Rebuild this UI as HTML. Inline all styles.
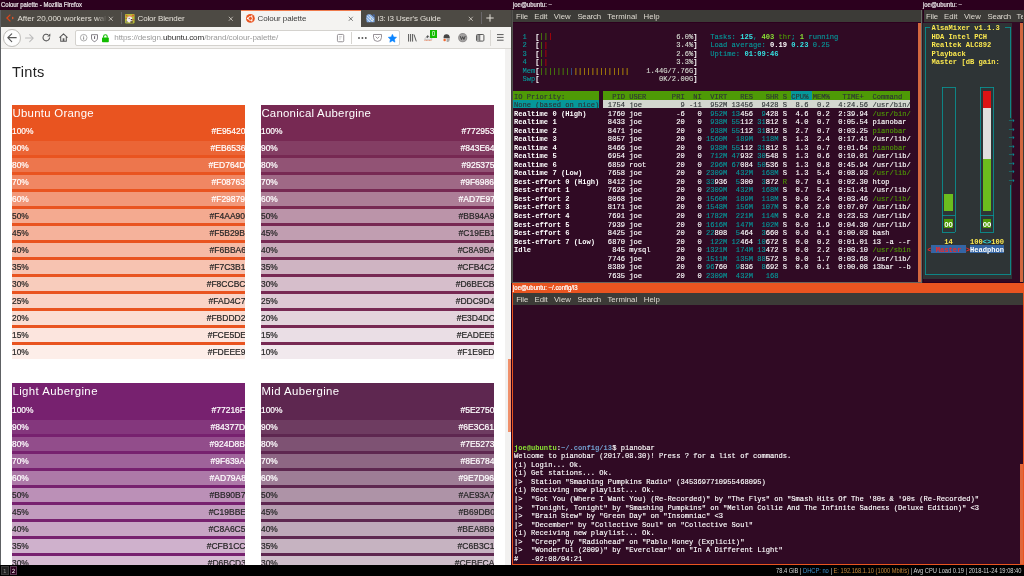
<!DOCTYPE html><html><head><meta charset="utf-8"><title>Colour palette - Mozilla Firefox</title><style>
*{box-sizing:border-box}
html,body{margin:0;padding:0}
body{width:1024px;height:576px;overflow:hidden;position:relative;background:#2c001e;font-family:"Liberation Sans",sans-serif}
#root{position:absolute;left:0;top:0;width:1024px;height:576px;overflow:hidden;background:#2c001e;will-change:transform}
.abs,.term,.term i,.term b,.tbg,.ttx{position:absolute}
.abs{overflow:hidden}
.term{width:0;height:0}
.term i{display:block}
.tbg,.ttx{left:0;top:0}
.ttx{transform-origin:0 0;transform:scale(0.0888745,0.0950000);font:80px/89.825px "Liberation Mono",monospace;white-space:pre}
.ttx b{font-weight:normal;display:block;-webkit-text-stroke:1.5px}
.ttl{position:absolute;top:0;height:9.5px;line-height:9.3px;font-size:6.3px;color:#e6e1e4;white-space:pre;-webkit-text-stroke:.22px}
.menu{position:absolute;height:12.6px;background:#3c3b37;color:#dfdbd2;font-size:7.8px;line-height:13.6px;white-space:pre;overflow:hidden}
.menu span{position:absolute;top:0}
.pal{position:absolute;width:233px;overflow:hidden;color:#fff}
.ph{position:absolute;left:.4px;top:1px;font-size:11.4px;line-height:14px;white-space:pre}
.pr{position:absolute;left:0;width:233px;height:13.75px;font-size:8.9px;line-height:14.2px;white-space:pre;-webkit-text-stroke:.22px}
.pr.dk{color:#262626}
.pl{position:absolute;left:0;transform-origin:0 50%;transform:scaleX(.944)}.pv{position:absolute;right:-.5px;transform-origin:100% 50%;transform:scaleX(.958)}
.tab{position:absolute;top:9.5px;height:17px;font-size:8px;line-height:17.5px;color:#e4e0d8;white-space:pre;overflow:hidden}
.tab .tx{position:absolute;left:16.5px;top:0}
.tab .x{position:absolute;left:107.3px;top:6.3px;width:5.6px;height:5.6px}
</style></head><body><div id="root"><div class="ttl" style="left:1px"><span class="f-ttl" style="display:inline-block;transform-origin:0 50%;transform:scaleX(0.9486)">Colour palette - Mozilla Firefox</span></div><div class="abs" style="left:0;top:9.5px;width:511px;height:556px;background:#fff"></div><div class="abs" style="left:0;top:9.5px;width:511px;height:17px;background:#4d4a44"></div><div class="abs" style="left:0;top:26.5px;width:511px;height:22.4px;background:#f4f3f1;border-bottom:.9px solid #d9d7d3"></div><div class="tab" style="left:1px;width:120px"><span class="tx"><span class="f-tab" style="letter-spacing:0.019px">After 20,000 workers wal</span></span><svg class="x" viewBox="0 0 7 7"><path d="M1 1L6 6M6 1L1 6" stroke="#e4e0d8" stroke-width="0.9" fill="none"/></svg></div><div class="tab" style="left:121px;width:120px"><span class="tx"><span class="f-tab" style="letter-spacing:-0.148px">Color Blender</span></span><svg class="x" viewBox="0 0 7 7"><path d="M1 1L6 6M6 1L1 6" stroke="#e4e0d8" stroke-width="0.9" fill="none"/></svg></div><div class="tab" style="left:241px;width:120px;background:#f4f3f1;color:#3c3c3c;border-top:1px solid #ee7a4c"><span class="tx" style="top:-1px"><span class="f-tab" style="letter-spacing:-0.072px">Colour palette</span></span><svg class="x" style="top:5.3px" viewBox="0 0 7 7"><path d="M1 1L6 6M6 1L1 6" stroke="#444" stroke-width="0.9" fill="none"/></svg></div><div class="tab" style="left:361px;width:120px"><span class="tx"><span class="f-tab" style="letter-spacing:-0.095px">i3: i3 User's Guide</span></span><svg class="x" viewBox="0 0 7 7"><path d="M1 1L6 6M6 1L1 6" stroke="#e4e0d8" stroke-width="0.9" fill="none"/></svg></div><div class="abs" style="left:96px;top:11px;width:11px;height:14px;background:linear-gradient(90deg,rgba(77,74,68,0),#4d4a44)"></div><div class="abs" style="left:120.7px;top:12.3px;width:1px;height:12px;background:#6a676a"></div><div class="abs" style="left:480.6px;top:12.3px;width:1px;height:12px;background:#6a676a"></div><svg style="position:absolute;left:485.6px;top:14px;width:8px;height:8px;overflow:visible" viewBox="0 0 8 8"><path d="M4 .3V7.7M.3 4H7.7" stroke="#e4e0d8" stroke-width="1" fill="none"/></svg><svg style="position:absolute;left:6px;top:14.3px;width:8.4px;height:8px;overflow:visible" viewBox="0 0 8.4 8"><path d="M4.4 .6L.9 4L4.4 7.4" stroke="#d9451b" stroke-width="1.3" fill="none"/><path d="M6 2.6L8 4L6 5.4z" fill="#e2562a"/></svg><svg style="position:absolute;left:125.3px;top:13.7px;width:9.6px;height:9.4px;overflow:visible" viewBox="0 0 9.6 9.4"><rect width="9.6" height="9.4" rx=".8" fill="#b4bb36"/><circle cx="1.6" cy="1.6" r=".9" fill="#e2532d"/><circle cx="8" cy="1.5" r=".9" fill="#e2532d"/><circle cx="8.3" cy="5.8" r=".8" fill="#e2532d"/><circle cx="1.2" cy="4.4" r=".7" fill="#c24a2a"/><path d="M2.6 2.8C3.4 1 6.4 1 7 2.8L6.6 3.6H3z" fill="#ee7a5a"/><ellipse cx="4.6" cy="5.6" rx="2.7" ry="3" fill="#f4eaf0"/><rect x="5.8" y="5" width="1.6" height="1.2" fill="#3a3a3a"/><rect x="3.6" y="3.9" width="1.2" height=".9" fill="#666"/><rect x="5.4" y="7.2" width="2.4" height="1.6" fill="#5a4a3a"/><rect x=".8" y="7" width="1.6" height="1.8" fill="#8a8a7a"/></svg><svg style="position:absolute;left:245.6px;top:14.1px;width:8.8px;height:8.8px;overflow:visible" viewBox="0 0 8.8 8.8"><circle cx="4.4" cy="4.4" r="4.4" fill="#e95420"/><circle cx="4.4" cy="4.4" r="2" fill="none" stroke="#fff" stroke-width=".9"/><circle cx="1.6" cy="4.4" r=".8" fill="#fff"/><circle cx="5.8" cy="2" r=".8" fill="#fff"/><circle cx="5.8" cy="6.8" r=".8" fill="#fff"/></svg><svg style="position:absolute;left:365.8px;top:13.9px;width:8.9px;height:8.6px;overflow:visible" viewBox="0 0 8.9 8.6"><path d="M.6 1.4C1.6 .2 3.6 0 4.8 .6L8.6 3.6V8.2H.8C.2 6 .1 3.4 .6 1.4z" fill="#86ade2"/><path d="M1.2 2L6.6 7.6M2.8 1L8 6M.8 4.4L4 8" stroke="#cfe0f5" stroke-width="1" fill="none"/><path d="M6.4 .4L8.6 .6V3.2z" fill="#3f66b4"/><circle cx="4.4" cy="4.2" r=".6" fill="#fff3c4"/><circle cx="6.4" cy="6.2" r=".6" fill="#fff3c4"/></svg><div class="abs" style="left:3px;top:28.8px;width:17.8px;height:17.8px;border-radius:50%;background:#fdfdfd;border:.7px solid #bdbbb7"></div><svg style="position:absolute;left:7px;top:33px;width:10px;height:9.4px;overflow:visible" viewBox="0 0 10 9.4"><path d="M9.2 4.7H1M4.7 .8L.8 4.7L4.7 8.6" stroke="#585858" stroke-width="1.15" fill="none" stroke-linecap="round" stroke-linejoin="round"/></svg><svg style="position:absolute;left:25px;top:33.6px;width:9px;height:8.2px;overflow:visible" viewBox="0 0 9 8.2"><path d="M.5 4.1H8M4.7 .6L8.2 4.1L4.7 7.6" stroke="#bcbcbc" stroke-width="1.05" fill="none" stroke-linecap="round" stroke-linejoin="round"/></svg><svg style="position:absolute;left:42px;top:33.2px;width:9px;height:9px;overflow:visible" viewBox="0 0 9 9"><path d="M7.6 4.6A3.3 3.3 0 1 1 6.3 1.9" stroke="#585858" stroke-width="1.1" fill="none"/><path d="M8.3 .5V3.6H5.2z" fill="#585858"/></svg><svg style="position:absolute;left:59.2px;top:33.3px;width:9px;height:8.8px;overflow:visible" viewBox="0 0 9 8.8"><path d="M.5 4.6L4.5 .8L8.5 4.6M1.7 4V8.2H7.3V4" stroke="#585858" stroke-width="1.05" fill="none" stroke-linejoin="round"/><rect x="3.7" y="5.3" width="1.7" height="2.9" fill="#585858"/></svg><div class="abs" style="left:74.5px;top:30px;width:325.5px;height:16px;background:#fff;border:1px solid #d4d2ce;border-radius:2px"></div><svg style="position:absolute;left:80.2px;top:34px;width:7.4px;height:7.4px;overflow:visible" viewBox="0 0 7.4 7.4"><circle cx="3.7" cy="3.7" r="3.3" fill="none" stroke="#8a8a8a" stroke-width=".7"/><rect x="3.3" y="3.2" width=".8" height="2.4" fill="#6a6a6a"/><rect x="3.3" y="1.8" width=".8" height=".8" fill="#6a6a6a"/></svg><svg style="position:absolute;left:90.8px;top:33.8px;width:7px;height:8px;overflow:visible" viewBox="0 0 7 8"><path d="M.5 .7H6.5V4C6.5 6 5 7 3.5 7.6C2 7 .5 6 .5 4z" fill="none" stroke="#6f6a72" stroke-width=".85"/><rect x="3" y="2" width="1.1" height="3" rx=".5" fill="#6f6a72"/></svg><svg style="position:absolute;left:101.7px;top:33.6px;width:6.8px;height:8.2px;overflow:visible" viewBox="0 0 6.8 8.2"><path d="M1.6 3.8V2.6A1.8 1.8 0 0 1 5.2 2.6V3.8" fill="none" stroke="#12bc00" stroke-width="1.1"/><rect x="0" y="3.6" width="6.8" height="4.6" rx=".7" fill="#12bc00"/></svg><div style="position:absolute;left:114.3px;top:30.3px;height:15.2px;line-height:15.6px;font-size:8.1px;white-space:pre;color:#9a9a9a"><span class="f-url" style="letter-spacing:-0.115px">https://design.<span style="color:#2a2a2a">ubuntu.com</span>/brand/colour-palette/</span></div><svg style="position:absolute;left:337px;top:33.6px;width:7.2px;height:8.2px;overflow:visible" viewBox="0 0 7.2 8.2"><rect x=".45" y=".45" width="6.3" height="7.3" rx="1" fill="none" stroke="#8b878b" stroke-width=".9"/><path d="M2 2.6H5M2 3.9H4.3M2 5.2H3.6" stroke="#c4c2c4" stroke-width=".7"/></svg><div class="abs" style="left:351.2px;top:32.2px;width:.6px;height:11.4px;background:#d6d4d0"></div><svg style="position:absolute;left:358.3px;top:36.9px;width:8.8px;height:2px;overflow:visible" viewBox="0 0 8.8 2"><circle cx="1" cy="1" r=".95" fill="#555"/><circle cx="4.4" cy="1" r=".95" fill="#555"/><circle cx="7.8" cy="1" r=".95" fill="#555"/></svg><svg style="position:absolute;left:373px;top:34px;width:9px;height:7.8px;overflow:visible" viewBox="0 0 9 7.8"><path d="M.5 .5H8.5V3.4A4 4 0 0 1 .5 3.4z" fill="none" stroke="#8b858b" stroke-width=".9" stroke-linejoin="round"/><path d="M2.7 2.7L4.5 4.4L6.3 2.7" fill="none" stroke="#8b858b" stroke-width=".9"/></svg><svg style="position:absolute;left:388px;top:33.6px;width:8.8px;height:8.6px;overflow:visible" viewBox="0 0 8.8 8.6"><path d="M4.4 .2L5.7 2.9L8.6 3.3L6.5 5.3L7 8.2L4.4 6.8L1.8 8.2L2.3 5.3L.2 3.3L3.1 2.9z" fill="#0a84ff" stroke="#0a84ff" stroke-width=".5" stroke-linejoin="round"/></svg><svg style="position:absolute;left:407.7px;top:34px;width:8.8px;height:7.6px;overflow:visible" viewBox="0 0 8.8 7.6"><path d="M.6 0V7.6M2.6 0V7.6M4.6 0V7.6" stroke="#585858" stroke-width="1"/><path d="M6 .5L8.3 7.4" stroke="#585858" stroke-width="1"/></svg><svg style="position:absolute;left:424.2px;top:34.4px;width:8.6px;height:7px;overflow:visible" viewBox="0 0 8.6 7"><path d="M.5 5.2L3.4 1.6L5.2 2.8L8 4.6C8.4 5.2 8 5.8 7.2 5.8H1z" fill="#ececec" stroke="#8a8a8a" stroke-width=".4"/><path d="M2.2 3L3.6 1.2L5 2.2L3.4 4.2z" fill="#555"/><path d="M.4 6.4H7.8" stroke="#ea6a3e" stroke-width=".7" stroke-dasharray="1 .5"/></svg><div class="abs" style="left:430px;top:30.3px;width:7.2px;height:7.6px;background:#12bc00;color:#fff;font-size:6.4px;line-height:7.8px;text-align:center">0</div><svg style="position:absolute;left:442.6px;top:33.8px;width:7px;height:8.2px;overflow:visible" viewBox="0 0 7 8.2"><path d="M1 1.4C2 .2 4.8 0 5.8 .9C6.6 1.6 6.8 3 6.8 4.2H.6C.5 3.2 .5 2.2 1 1.4z" fill="#454545"/><path d="M3.6 4.2H6.8C6.8 5.4 6.6 6.6 6.2 7.2C5.6 8 4.4 8.1 3.6 7.7z" fill="#a9a9a9"/><circle cx="1.6" cy="6.1" r="1.25" fill="#f2662e"/></svg><svg style="position:absolute;left:458.3px;top:33.2px;width:9.4px;height:9.4px;overflow:visible" viewBox="0 0 9.4 9.4"><circle cx="4.7" cy="4.7" r="4.6" fill="#8f8d8d"/><circle cx="4.7" cy="4.7" r="3.7" fill="#a3a1a1"/><path d="M2.2 3.1L3.5 6.5L4.7 3.7L5.9 6.5L7.2 3.1" fill="none" stroke="#454545" stroke-width="1" stroke-linejoin="round"/></svg><svg style="position:absolute;left:476px;top:34px;width:8.4px;height:7.6px;overflow:visible" viewBox="0 0 8.4 7.6"><rect x=".5" y=".5" width="7.4" height="6.6" rx="1" fill="none" stroke="#585858" stroke-width="1"/><rect x="1" y="1" width="2.8" height="5.6" fill="#9a9a9a"/><path d="M3.8 .5V7.1" stroke="#585858" stroke-width=".8"/></svg><div class="abs" style="left:490.2px;top:29.5px;width:.6px;height:16.5px;background:#dad8d4"></div><svg style="position:absolute;left:497.4px;top:34.4px;width:6.6px;height:6.8px;overflow:visible" viewBox="0 0 6.6 6.8"><path d="M0 .6H6.6M0 3.4H6.6M0 6.2H6.6" stroke="#585858" stroke-width="1"/></svg><div class="abs" style="left:1px;top:48.9px;width:504px;height:516.1px;background:#fff"><div style="position:absolute;left:11px;top:14.6px;font-size:14.6px;line-height:18px;color:#222;letter-spacing:.3px">Tints</div><div style="position:absolute;left:-1px;top:-48.9px"><div class="pal" style="left:12px;top:104.5px;height:254.5px;background:#E95420"><div class="ph"><span class="f-ph" style="letter-spacing:0.285px">Ubuntu Orange</span></div><div class="pr" style="top:19.75px;background:#E95420"><span class="pl">100%</span><span class="pv">#E95420</span></div><div class="pr" style="top:36.75px;background:#EB6536"><span class="pl">90%</span><span class="pv">#EB6536</span></div><div class="pr" style="top:53.75px;background:#ED764D"><span class="pl">80%</span><span class="pv">#ED764D</span></div><div class="pr" style="top:70.75px;background:#F08763"><span class="pl">70%</span><span class="pv">#F08763</span></div><div class="pr" style="top:87.75px;background:#F29879"><span class="pl">60%</span><span class="pv">#F29879</span></div><div class="pr dk" style="top:104.75px;background:#F4AA90"><span class="pl">50%</span><span class="pv">#F4AA90</span></div><div class="pr dk" style="top:121.75px;background:#F5B29B"><span class="pl">45%</span><span class="pv">#F5B29B</span></div><div class="pr dk" style="top:138.75px;background:#F6BBA6"><span class="pl">40%</span><span class="pv">#F6BBA6</span></div><div class="pr dk" style="top:155.75px;background:#F7C3B1"><span class="pl">35%</span><span class="pv">#F7C3B1</span></div><div class="pr dk" style="top:172.75px;background:#F8CCBC"><span class="pl">30%</span><span class="pv">#F8CCBC</span></div><div class="pr dk" style="top:189.75px;background:#FAD4C7"><span class="pl">25%</span><span class="pv">#FAD4C7</span></div><div class="pr dk" style="top:206.75px;background:#FBDDD2"><span class="pl">20%</span><span class="pv">#FBDDD2</span></div><div class="pr dk" style="top:223.75px;background:#FCE5DE"><span class="pl">15%</span><span class="pv">#FCE5DE</span></div><div class="pr dk" style="top:240.75px;background:#FDEEE9"><span class="pl">10%</span><span class="pv">#FDEEE9</span></div></div><div class="pal" style="left:261px;top:104.5px;height:254.5px;background:#772953"><div class="ph"><span class="f-ph" style="letter-spacing:0.246px">Canonical Aubergine</span></div><div class="pr" style="top:19.75px;background:#772953"><span class="pl">100%</span><span class="pv">#772953</span></div><div class="pr" style="top:36.75px;background:#843E64"><span class="pl">90%</span><span class="pv">#843E64</span></div><div class="pr" style="top:53.75px;background:#925375"><span class="pl">80%</span><span class="pv">#925375</span></div><div class="pr" style="top:70.75px;background:#9F6986"><span class="pl">70%</span><span class="pv">#9F6986</span></div><div class="pr" style="top:87.75px;background:#AD7E97"><span class="pl">60%</span><span class="pv">#AD7E97</span></div><div class="pr dk" style="top:104.75px;background:#BB94A9"><span class="pl">50%</span><span class="pv">#BB94A9</span></div><div class="pr dk" style="top:121.75px;background:#C19EB1"><span class="pl">45%</span><span class="pv">#C19EB1</span></div><div class="pr dk" style="top:138.75px;background:#C8A9BA"><span class="pl">40%</span><span class="pv">#C8A9BA</span></div><div class="pr dk" style="top:155.75px;background:#CFB4C2"><span class="pl">35%</span><span class="pv">#CFB4C2</span></div><div class="pr dk" style="top:172.75px;background:#D6BECB"><span class="pl">30%</span><span class="pv">#D6BECB</span></div><div class="pr dk" style="top:189.75px;background:#DDC9D4"><span class="pl">25%</span><span class="pv">#DDC9D4</span></div><div class="pr dk" style="top:206.75px;background:#E3D4DC"><span class="pl">20%</span><span class="pv">#E3D4DC</span></div><div class="pr dk" style="top:223.75px;background:#EADEE5"><span class="pl">15%</span><span class="pv">#EADEE5</span></div><div class="pr dk" style="top:240.75px;background:#F1E9ED"><span class="pl">10%</span><span class="pv">#F1E9ED</span></div></div><div class="pal" style="left:12px;top:383px;height:203.5px;background:#77216F"><div class="ph"><span class="f-ph" style="letter-spacing:0.422px">Light Aubergine</span></div><div class="pr" style="top:19.75px;background:#77216F"><span class="pl">100%</span><span class="pv">#77216F</span></div><div class="pr" style="top:36.75px;background:#84377D"><span class="pl">90%</span><span class="pv">#84377D</span></div><div class="pr" style="top:53.75px;background:#924D8B"><span class="pl">80%</span><span class="pv">#924D8B</span></div><div class="pr" style="top:70.75px;background:#9F639A"><span class="pl">70%</span><span class="pv">#9F639A</span></div><div class="pr" style="top:87.75px;background:#AD79A8"><span class="pl">60%</span><span class="pv">#AD79A8</span></div><div class="pr dk" style="top:104.75px;background:#BB90B7"><span class="pl">50%</span><span class="pv">#BB90B7</span></div><div class="pr dk" style="top:121.75px;background:#C19BBE"><span class="pl">45%</span><span class="pv">#C19BBE</span></div><div class="pr dk" style="top:138.75px;background:#C8A6C5"><span class="pl">40%</span><span class="pv">#C8A6C5</span></div><div class="pr dk" style="top:155.75px;background:#CFB1CC"><span class="pl">35%</span><span class="pv">#CFB1CC</span></div><div class="pr dk" style="top:172.75px;background:#D6BCD3"><span class="pl">30%</span><span class="pv">#D6BCD3</span></div><div class="pr dk" style="top:189.75px;background:#DDC7DB"><span class="pl">25%</span><span class="pv">#DDC7DB</span></div></div><div class="pal" style="left:261px;top:383px;height:203.5px;background:#5E2750"><div class="ph"><span class="f-ph" style="letter-spacing:0.413px">Mid Aubergine</span></div><div class="pr" style="top:19.75px;background:#5E2750"><span class="pl">100%</span><span class="pv">#5E2750</span></div><div class="pr" style="top:36.75px;background:#6E3C61"><span class="pl">90%</span><span class="pv">#6E3C61</span></div><div class="pr" style="top:53.75px;background:#7E5273"><span class="pl">80%</span><span class="pv">#7E5273</span></div><div class="pr" style="top:70.75px;background:#8E6784"><span class="pl">70%</span><span class="pv">#8E6784</span></div><div class="pr" style="top:87.75px;background:#9E7D96"><span class="pl">60%</span><span class="pv">#9E7D96</span></div><div class="pr dk" style="top:104.75px;background:#AE93A7"><span class="pl">50%</span><span class="pv">#AE93A7</span></div><div class="pr dk" style="top:121.75px;background:#B69DB0"><span class="pl">45%</span><span class="pv">#B69DB0</span></div><div class="pr dk" style="top:138.75px;background:#BEA8B9"><span class="pl">40%</span><span class="pv">#BEA8B9</span></div><div class="pr dk" style="top:155.75px;background:#C6B3C1"><span class="pl">35%</span><span class="pv">#C6B3C1</span></div><div class="pr dk" style="top:172.75px;background:#CEBECA"><span class="pl">30%</span><span class="pv">#CEBECA</span></div><div class="pr dk" style="top:189.75px;background:#D6C9D3"><span class="pl">25%</span><span class="pv">#D6C9D3</span></div></div></div></div><div class="abs" style="left:505px;top:48.9px;width:6px;height:516.1px;background:#f2f1f0"></div><div class="abs" style="left:508px;top:359px;width:3px;height:72.5px;background:#f0916c"></div><div class="abs" style="left:0;top:9.5px;width:.9px;height:555.5px;background:#5e6164"></div><div class="abs" style="left:510.9px;top:9.5px;width:2.3px;height:273px;background:linear-gradient(90deg,#3a3935,#5c5b57)"></div><div class="ttl" style="left:513px"><span class="f-ttl" style="display:inline-block;transform-origin:0 50%;transform:scaleX(0.9434)">joe@ubuntu: ~</span></div><div class="menu" style="left:513.2px;top:9.5px;width:408.3px"><span style="left:2.8px"><span class="f-menu" style="letter-spacing:-0.170px">File</span></span><span style="left:21.1px"><span class="f-menu" style="letter-spacing:-0.059px">Edit</span></span><span style="left:40.6px"><span class="f-menu" style="letter-spacing:0.059px">View</span></span><span style="left:64.2px"><span class="f-menu" style="letter-spacing:-0.220px">Search</span></span><span style="left:94px"><span class="f-menu" style="letter-spacing:0.054px">Terminal</span></span><span style="left:130.3px"><span class="f-menu" style="letter-spacing:0.063px">Help</span></span></div><div class="abs" style="left:513.2px;top:22.5px;width:405px;height:259.5px;background:#300a24"></div><div class="abs" style="left:917.8px;top:22.5px;width:3.1px;height:259.5px;background:#d4673f"></div><div class="abs" style="left:920.9px;top:9.5px;width:2.3px;height:273px;background:linear-gradient(90deg,#686866 0,#686866 32%,#2b1a22 32%)"></div><div class="abs" style="left:513px;top:281.9px;width:408px;height:1px;background:#66645f"></div><div class="term" style="left:513.4px;top:22.85px"><div class="tbg"><i style="left:0.000px;top:68.267px;width:85.333px;height:8.533px;background:#4e9a06"></i><i style="left:89.600px;top:68.267px;width:187.733px;height:8.533px;background:#4e9a06"></i><i style="left:277.333px;top:68.267px;width:21.333px;height:8.533px;background:#06989a"></i><i style="left:298.667px;top:68.267px;width:98.133px;height:8.533px;background:#4e9a06"></i><i style="left:0.000px;top:76.800px;width:85.333px;height:8.533px;background:#06989a"></i><i style="left:89.600px;top:76.800px;width:307.200px;height:8.533px;background:#d3d7cf"></i></div><div class="ttx" style="left:0.5px;top:0.7px"><b style="left:96.02px;top:89.82px;color:#06989a;">1</b><b style="left:240.04px;top:89.82px;color:#ffffff;font-weight:bold;-webkit-text-stroke:0;">[</b><b style="left:288.05px;top:89.82px;color:#4e9a06;transform:scaleY(.86);transform-origin:0 38%;">||</b><b style="left:384.06px;top:89.82px;color:#cc0000;transform:scaleY(.86);transform-origin:0 38%;">|</b><b style="left:1824.30px;top:89.82px;color:#d3d7cf;">6.0%</b><b style="left:2016.33px;top:89.82px;color:#ffffff;font-weight:bold;-webkit-text-stroke:0;">]</b><b style="left:2208.36px;top:89.82px;color:#06989a;">Tasks:</b><b style="left:2544.41px;top:89.82px;color:#34e2e2;font-weight:bold;-webkit-text-stroke:0;">125</b><b style="left:2688.44px;top:89.82px;color:#06989a;">,</b><b style="left:2784.45px;top:89.82px;color:#8ae234;font-weight:bold;-webkit-text-stroke:0;">403</b><b style="left:2976.48px;top:89.82px;color:#4e9a06;">thr</b><b style="left:3120.51px;top:89.82px;color:#06989a;">;</b><b style="left:3216.52px;top:89.82px;color:#8ae234;font-weight:bold;-webkit-text-stroke:0;">1</b><b style="left:3312.54px;top:89.82px;color:#06989a;">running</b><b style="left:96.02px;top:179.65px;color:#06989a;">2</b><b style="left:240.04px;top:179.65px;color:#ffffff;font-weight:bold;-webkit-text-stroke:0;">[</b><b style="left:288.05px;top:179.65px;color:#4e9a06;transform:scaleY(.86);transform-origin:0 38%;">|</b><b style="left:336.05px;top:179.65px;color:#cc0000;transform:scaleY(.86);transform-origin:0 38%;">|</b><b style="left:1824.30px;top:179.65px;color:#d3d7cf;">3.4%</b><b style="left:2016.33px;top:179.65px;color:#ffffff;font-weight:bold;-webkit-text-stroke:0;">]</b><b style="left:2208.36px;top:179.65px;color:#06989a;">Load average:</b><b style="left:2880.47px;top:179.65px;color:#ffffff;font-weight:bold;-webkit-text-stroke:0;">0.19</b><b style="left:3120.51px;top:179.65px;color:#34e2e2;font-weight:bold;-webkit-text-stroke:0;">0.23</b><b style="left:3360.55px;top:179.65px;color:#06989a;">0.25</b><b style="left:96.02px;top:269.47px;color:#06989a;">3</b><b style="left:240.04px;top:269.47px;color:#ffffff;font-weight:bold;-webkit-text-stroke:0;">[</b><b style="left:288.05px;top:269.47px;color:#4e9a06;transform:scaleY(.86);transform-origin:0 38%;">|</b><b style="left:336.05px;top:269.47px;color:#cc0000;transform:scaleY(.86);transform-origin:0 38%;">|</b><b style="left:1824.30px;top:269.47px;color:#d3d7cf;">2.6%</b><b style="left:2016.33px;top:269.47px;color:#ffffff;font-weight:bold;-webkit-text-stroke:0;">]</b><b style="left:2208.36px;top:269.47px;color:#06989a;">Uptime:</b><b style="left:2592.42px;top:269.47px;color:#34e2e2;font-weight:bold;-webkit-text-stroke:0;">01:09:46</b><b style="left:96.02px;top:359.30px;color:#06989a;">4</b><b style="left:240.04px;top:359.30px;color:#ffffff;font-weight:bold;-webkit-text-stroke:0;">[</b><b style="left:288.05px;top:359.30px;color:#4e9a06;transform:scaleY(.86);transform-origin:0 38%;">|</b><b style="left:336.05px;top:359.30px;color:#cc0000;transform:scaleY(.86);transform-origin:0 38%;">|</b><b style="left:1824.30px;top:359.30px;color:#d3d7cf;">3.3%</b><b style="left:2016.33px;top:359.30px;color:#ffffff;font-weight:bold;-webkit-text-stroke:0;">]</b><b style="left:96.02px;top:449.12px;color:#06989a;">Mem</b><b style="left:240.04px;top:449.12px;color:#ffffff;font-weight:bold;-webkit-text-stroke:0;">[</b><b style="left:288.05px;top:449.12px;color:#4e9a06;transform:scaleY(.86);transform-origin:0 38%;">|||||||</b><b style="left:624.10px;top:449.12px;color:#3465a4;transform:scaleY(.86);transform-origin:0 38%;">|</b><b style="left:672.11px;top:449.12px;color:#c4a000;transform:scaleY(.86);transform-origin:0 38%;">|||||||||||||</b><b style="left:1488.24px;top:449.12px;color:#d3d7cf;">1.44G/7.76G</b><b style="left:2016.33px;top:449.12px;color:#ffffff;font-weight:bold;-webkit-text-stroke:0;">]</b><b style="left:96.02px;top:538.95px;color:#06989a;">Swp</b><b style="left:240.04px;top:538.95px;color:#ffffff;font-weight:bold;-webkit-text-stroke:0;">[</b><b style="left:1632.27px;top:538.95px;color:#d3d7cf;">0K/2.00G</b><b style="left:2016.33px;top:538.95px;color:#ffffff;font-weight:bold;-webkit-text-stroke:0;">]</b><b style="left:0.00px;top:718.60px;color:#2e3436;">IO Priority:        </b><b style="left:1008.16px;top:718.60px;color:#2e3436;">  PID USER      PRI  NI  VIRT   RES   SHR S </b><b style="left:3120.51px;top:718.60px;color:#2e3436;">CPU% </b><b style="left:3360.55px;top:718.60px;color:#2e3436;">MEM%   TIME+  Command  </b><b style="left:0.00px;top:808.42px;color:#2e3436;">None (based on nice)</b><b style="left:1008.16px;top:808.42px;color:#2e3436;"> 1754 joe         9 -11  952M 13456  9428 S  8.6  0.2  4:24.56 /usr/bin/</b><b style="left:0.00px;top:898.25px;color:#ffffff;font-weight:bold;-webkit-text-stroke:0;">Realtime 0 (High)</b><b style="left:1056.17px;top:898.25px;color:#ffffff;">1760 joe        -6   0</b><b style="left:2208.36px;top:898.25px;color:#06989a;">952M</b><b style="left:2448.40px;top:898.25px;color:#06989a;">13</b><b style="left:2544.41px;top:898.25px;color:#ffffff;">456</b><b style="left:2784.45px;top:898.25px;color:#06989a;">9</b><b style="left:2832.46px;top:898.25px;color:#ffffff;">428</b><b style="left:3024.49px;top:898.25px;color:#ffffff;">S</b><b style="left:3168.51px;top:898.25px;color:#ffffff;">4.6  0.2  2:39.94</b><b style="left:4032.66px;top:898.25px;color:#4e9a06;">/usr/bin/</b><b style="left:0.00px;top:988.07px;color:#ffffff;font-weight:bold;-webkit-text-stroke:0;">Realtime 1</b><b style="left:1056.17px;top:988.07px;color:#ffffff;">8433 joe        20   0</b><b style="left:2208.36px;top:988.07px;color:#06989a;">938M</b><b style="left:2448.40px;top:988.07px;color:#06989a;">55</b><b style="left:2544.41px;top:988.07px;color:#ffffff;">112</b><b style="left:2736.44px;top:988.07px;color:#06989a;">31</b><b style="left:2832.46px;top:988.07px;color:#ffffff;">812</b><b style="left:3024.49px;top:988.07px;color:#ffffff;">S</b><b style="left:3168.51px;top:988.07px;color:#ffffff;">4.0  0.7  0:05.54</b><b style="left:4032.66px;top:988.07px;color:#ffffff;">pianobar</b><b style="left:0.00px;top:1077.89px;color:#ffffff;font-weight:bold;-webkit-text-stroke:0;">Realtime 2</b><b style="left:1056.17px;top:1077.89px;color:#ffffff;">8471 joe        20   0</b><b style="left:2208.36px;top:1077.89px;color:#06989a;">938M</b><b style="left:2448.40px;top:1077.89px;color:#06989a;">55</b><b style="left:2544.41px;top:1077.89px;color:#ffffff;">112</b><b style="left:2736.44px;top:1077.89px;color:#06989a;">31</b><b style="left:2832.46px;top:1077.89px;color:#ffffff;">812</b><b style="left:3024.49px;top:1077.89px;color:#ffffff;">S</b><b style="left:3168.51px;top:1077.89px;color:#ffffff;">2.7  0.7  0:03.25</b><b style="left:4032.66px;top:1077.89px;color:#4e9a06;">pianobar</b><b style="left:0.00px;top:1167.72px;color:#ffffff;font-weight:bold;-webkit-text-stroke:0;">Realtime 3</b><b style="left:1056.17px;top:1167.72px;color:#ffffff;">8057 joe        20   0</b><b style="left:2160.35px;top:1167.72px;color:#06989a;">1560M</b><b style="left:2496.41px;top:1167.72px;color:#06989a;">189M</b><b style="left:2784.45px;top:1167.72px;color:#06989a;">118M</b><b style="left:3024.49px;top:1167.72px;color:#ffffff;">S</b><b style="left:3168.51px;top:1167.72px;color:#ffffff;">1.3  2.4  0:17.41</b><b style="left:4032.66px;top:1167.72px;color:#ffffff;">/usr/lib/</b><b style="left:0.00px;top:1257.54px;color:#ffffff;font-weight:bold;-webkit-text-stroke:0;">Realtime 4</b><b style="left:1056.17px;top:1257.54px;color:#ffffff;">8466 joe        20   0</b><b style="left:2208.36px;top:1257.54px;color:#06989a;">938M</b><b style="left:2448.40px;top:1257.54px;color:#06989a;">55</b><b style="left:2544.41px;top:1257.54px;color:#ffffff;">112</b><b style="left:2736.44px;top:1257.54px;color:#06989a;">31</b><b style="left:2832.46px;top:1257.54px;color:#ffffff;">812</b><b style="left:3024.49px;top:1257.54px;color:#ffffff;">S</b><b style="left:3168.51px;top:1257.54px;color:#ffffff;">1.3  0.7  0:01.64</b><b style="left:4032.66px;top:1257.54px;color:#4e9a06;">pianobar</b><b style="left:0.00px;top:1347.37px;color:#ffffff;font-weight:bold;-webkit-text-stroke:0;">Realtime 5</b><b style="left:1056.17px;top:1347.37px;color:#ffffff;">6954 joe        20   0</b><b style="left:2208.36px;top:1347.37px;color:#06989a;">712M</b><b style="left:2448.40px;top:1347.37px;color:#06989a;">47</b><b style="left:2544.41px;top:1347.37px;color:#ffffff;">932</b><b style="left:2736.44px;top:1347.37px;color:#06989a;">30</b><b style="left:2832.46px;top:1347.37px;color:#ffffff;">548</b><b style="left:3024.49px;top:1347.37px;color:#ffffff;">S</b><b style="left:3168.51px;top:1347.37px;color:#ffffff;">1.3  0.6  0:10.01</b><b style="left:4032.66px;top:1347.37px;color:#ffffff;">/usr/lib/</b><b style="left:0.00px;top:1437.19px;color:#ffffff;font-weight:bold;-webkit-text-stroke:0;">Realtime 6</b><b style="left:1056.17px;top:1437.19px;color:#ffffff;">6859 root       20   0</b><b style="left:2208.36px;top:1437.19px;color:#06989a;">296M</b><b style="left:2448.40px;top:1437.19px;color:#06989a;">67</b><b style="left:2544.41px;top:1437.19px;color:#ffffff;">084</b><b style="left:2736.44px;top:1437.19px;color:#06989a;">50</b><b style="left:2832.46px;top:1437.19px;color:#ffffff;">536</b><b style="left:3024.49px;top:1437.19px;color:#ffffff;">S</b><b style="left:3168.51px;top:1437.19px;color:#ffffff;">1.3  0.8  0:45.94</b><b style="left:4032.66px;top:1437.19px;color:#ffffff;">/usr/lib/</b><b style="left:0.00px;top:1527.02px;color:#ffffff;font-weight:bold;-webkit-text-stroke:0;">Realtime 7 (Low)</b><b style="left:1056.17px;top:1527.02px;color:#ffffff;">7658 joe        20   0</b><b style="left:2160.35px;top:1527.02px;color:#06989a;">2309M</b><b style="left:2496.41px;top:1527.02px;color:#06989a;">432M</b><b style="left:2784.45px;top:1527.02px;color:#06989a;">168M</b><b style="left:3024.49px;top:1527.02px;color:#ffffff;">S</b><b style="left:3168.51px;top:1527.02px;color:#ffffff;">1.3  5.4  0:08.93</b><b style="left:4032.66px;top:1527.02px;color:#4e9a06;">/usr/lib/</b><b style="left:0.00px;top:1616.84px;color:#ffffff;font-weight:bold;-webkit-text-stroke:0;">Best-effort 0 (High)</b><b style="left:1056.17px;top:1616.84px;color:#ffffff;">8412 joe        20   0</b><b style="left:2160.35px;top:1616.84px;color:#06989a;">33</b><b style="left:2256.37px;top:1616.84px;color:#ffffff;">936</b><b style="left:2496.41px;top:1616.84px;color:#06989a;">5</b><b style="left:2544.41px;top:1616.84px;color:#ffffff;">300</b><b style="left:2784.45px;top:1616.84px;color:#06989a;">3</b><b style="left:2832.46px;top:1616.84px;color:#ffffff;">872</b><b style="left:3024.49px;top:1616.84px;color:#4e9a06;">R</b><b style="left:3168.51px;top:1616.84px;color:#ffffff;">0.7  0.1  0:02.30</b><b style="left:4032.66px;top:1616.84px;color:#ffffff;">htop</b><b style="left:0.00px;top:1706.67px;color:#ffffff;font-weight:bold;-webkit-text-stroke:0;">Best-effort 1</b><b style="left:1056.17px;top:1706.67px;color:#ffffff;">7629 joe        20   0</b><b style="left:2160.35px;top:1706.67px;color:#06989a;">2309M</b><b style="left:2496.41px;top:1706.67px;color:#06989a;">432M</b><b style="left:2784.45px;top:1706.67px;color:#06989a;">168M</b><b style="left:3024.49px;top:1706.67px;color:#ffffff;">S</b><b style="left:3168.51px;top:1706.67px;color:#ffffff;">0.7  5.4  0:51.41</b><b style="left:4032.66px;top:1706.67px;color:#ffffff;">/usr/lib/</b><b style="left:0.00px;top:1796.49px;color:#ffffff;font-weight:bold;-webkit-text-stroke:0;">Best-effort 2</b><b style="left:1056.17px;top:1796.49px;color:#ffffff;">8068 joe        20   0</b><b style="left:2160.35px;top:1796.49px;color:#06989a;">1560M</b><b style="left:2496.41px;top:1796.49px;color:#06989a;">189M</b><b style="left:2784.45px;top:1796.49px;color:#06989a;">118M</b><b style="left:3024.49px;top:1796.49px;color:#ffffff;">S</b><b style="left:3168.51px;top:1796.49px;color:#ffffff;">0.0  2.4  0:03.46</b><b style="left:4032.66px;top:1796.49px;color:#4e9a06;">/usr/lib/</b><b style="left:0.00px;top:1886.32px;color:#ffffff;font-weight:bold;-webkit-text-stroke:0;">Best-effort 3</b><b style="left:1056.17px;top:1886.32px;color:#ffffff;">8171 joe        20   0</b><b style="left:2160.35px;top:1886.32px;color:#06989a;">1548M</b><b style="left:2496.41px;top:1886.32px;color:#06989a;">156M</b><b style="left:2784.45px;top:1886.32px;color:#06989a;">107M</b><b style="left:3024.49px;top:1886.32px;color:#ffffff;">S</b><b style="left:3168.51px;top:1886.32px;color:#ffffff;">0.0  2.0  0:07.07</b><b style="left:4032.66px;top:1886.32px;color:#ffffff;">/usr/lib/</b><b style="left:0.00px;top:1976.14px;color:#ffffff;font-weight:bold;-webkit-text-stroke:0;">Best-effort 4</b><b style="left:1056.17px;top:1976.14px;color:#ffffff;">7691 joe        20   0</b><b style="left:2160.35px;top:1976.14px;color:#06989a;">1782M</b><b style="left:2496.41px;top:1976.14px;color:#06989a;">221M</b><b style="left:2784.45px;top:1976.14px;color:#06989a;">114M</b><b style="left:3024.49px;top:1976.14px;color:#ffffff;">S</b><b style="left:3168.51px;top:1976.14px;color:#ffffff;">0.0  2.8  0:23.53</b><b style="left:4032.66px;top:1976.14px;color:#ffffff;">/usr/lib/</b><b style="left:0.00px;top:2065.96px;color:#ffffff;font-weight:bold;-webkit-text-stroke:0;">Best-effort 5</b><b style="left:1056.17px;top:2065.96px;color:#ffffff;">7939 joe        20   0</b><b style="left:2160.35px;top:2065.96px;color:#06989a;">1616M</b><b style="left:2496.41px;top:2065.96px;color:#06989a;">147M</b><b style="left:2784.45px;top:2065.96px;color:#06989a;">102M</b><b style="left:3024.49px;top:2065.96px;color:#ffffff;">S</b><b style="left:3168.51px;top:2065.96px;color:#ffffff;">0.0  1.9  0:04.30</b><b style="left:4032.66px;top:2065.96px;color:#ffffff;">/usr/lib/</b><b style="left:0.00px;top:2155.79px;color:#ffffff;font-weight:bold;-webkit-text-stroke:0;">Best-effort 6</b><b style="left:1056.17px;top:2155.79px;color:#ffffff;">8425 joe        20   0</b><b style="left:2160.35px;top:2155.79px;color:#06989a;">22</b><b style="left:2256.37px;top:2155.79px;color:#ffffff;">808</b><b style="left:2496.41px;top:2155.79px;color:#06989a;">5</b><b style="left:2544.41px;top:2155.79px;color:#ffffff;">464</b><b style="left:2784.45px;top:2155.79px;color:#06989a;">3</b><b style="left:2832.46px;top:2155.79px;color:#ffffff;">660</b><b style="left:3024.49px;top:2155.79px;color:#ffffff;">S</b><b style="left:3168.51px;top:2155.79px;color:#ffffff;">0.0  0.1  0:00.03</b><b style="left:4032.66px;top:2155.79px;color:#ffffff;">bash</b><b style="left:0.00px;top:2245.61px;color:#ffffff;font-weight:bold;-webkit-text-stroke:0;">Best-effort 7 (Low)</b><b style="left:1056.17px;top:2245.61px;color:#ffffff;">6870 joe        20   0</b><b style="left:2208.36px;top:2245.61px;color:#06989a;">122M</b><b style="left:2448.40px;top:2245.61px;color:#06989a;">12</b><b style="left:2544.41px;top:2245.61px;color:#ffffff;">464</b><b style="left:2736.44px;top:2245.61px;color:#06989a;">10</b><b style="left:2832.46px;top:2245.61px;color:#ffffff;">672</b><b style="left:3024.49px;top:2245.61px;color:#ffffff;">S</b><b style="left:3168.51px;top:2245.61px;color:#ffffff;">0.0  0.2  0:01.01</b><b style="left:4032.66px;top:2245.61px;color:#ffffff;">i3 -a --r</b><b style="left:0.00px;top:2335.44px;color:#ffffff;font-weight:bold;-webkit-text-stroke:0;">Idle</b><b style="left:1104.18px;top:2335.44px;color:#ffffff;">845 mysql      20   0</b><b style="left:2160.35px;top:2335.44px;color:#06989a;">1321M</b><b style="left:2496.41px;top:2335.44px;color:#06989a;">174M</b><b style="left:2736.44px;top:2335.44px;color:#06989a;">13</b><b style="left:2832.46px;top:2335.44px;color:#ffffff;">472</b><b style="left:3024.49px;top:2335.44px;color:#ffffff;">S</b><b style="left:3168.51px;top:2335.44px;color:#ffffff;">0.0  2.2  0:00.10</b><b style="left:4032.66px;top:2335.44px;color:#4e9a06;">/usr/sbin</b><b style="left:1056.17px;top:2425.26px;color:#ffffff;">7746 joe        20   0</b><b style="left:2160.35px;top:2425.26px;color:#06989a;">1511M</b><b style="left:2496.41px;top:2425.26px;color:#06989a;">135M</b><b style="left:2736.44px;top:2425.26px;color:#06989a;">88</b><b style="left:2832.46px;top:2425.26px;color:#ffffff;">572</b><b style="left:3024.49px;top:2425.26px;color:#ffffff;">S</b><b style="left:3168.51px;top:2425.26px;color:#ffffff;">0.0  1.7  0:03.68</b><b style="left:4032.66px;top:2425.26px;color:#ffffff;">/usr/lib/</b><b style="left:1056.17px;top:2515.09px;color:#ffffff;">8389 joe        20   0</b><b style="left:2160.35px;top:2515.09px;color:#06989a;">96</b><b style="left:2256.37px;top:2515.09px;color:#ffffff;">760</b><b style="left:2496.41px;top:2515.09px;color:#06989a;">9</b><b style="left:2544.41px;top:2515.09px;color:#ffffff;">836</b><b style="left:2784.45px;top:2515.09px;color:#06989a;">8</b><b style="left:2832.46px;top:2515.09px;color:#ffffff;">692</b><b style="left:3024.49px;top:2515.09px;color:#ffffff;">S</b><b style="left:3168.51px;top:2515.09px;color:#ffffff;">0.0  0.1  0:00.08</b><b style="left:4032.66px;top:2515.09px;color:#ffffff;">i3bar --b</b><b style="left:1056.17px;top:2604.91px;color:#ffffff;">7635 joe        20   0</b><b style="left:2160.35px;top:2604.91px;color:#06989a;">2309M</b><b style="left:2496.41px;top:2604.91px;color:#06989a;">432M</b><b style="left:2832.46px;top:2604.91px;color:#06989a;">168</b></div></div><div class="ttl" style="left:923px"><span class="f-ttl" style="display:inline-block;transform-origin:0 50%;transform:scaleX(0.9434)">joe@ubuntu: ~</span></div><div class="menu" style="left:923.5px;top:9.5px;width:100.5px"><span style="left:2.5px"><span class="f-menu" style="letter-spacing:-0.170px">File</span></span><span style="left:20.6px"><span class="f-menu" style="letter-spacing:-0.059px">Edit</span></span><span style="left:40.4px"><span class="f-menu" style="letter-spacing:0.059px">View</span></span><span style="left:64.1px"><span class="f-menu" style="letter-spacing:-0.220px">Search</span></span><span style="left:93.1px"><span class="f-menu" style="letter-spacing:0.054px">Terminal</span></span></div><div class="abs" style="left:923.5px;top:22.2px;width:97px;height:259.8px;background:#300a24"></div><div class="abs" style="left:1020px;top:22.5px;width:3.2px;height:259.5px;background:#d0663e"></div><div class="abs" style="left:1023.2px;top:9.5px;width:.8px;height:273px;background:#3a3935"></div><div class="term" style="left:922.9px;top:22.85px"><div class="tbg"><i style="left:0;top:0;width:89.600px;height:256.000px;background:#2e3436"></i><i style="left:1.833px;top:3.967px;width:5.720px;height:.6px;background:#06989a;opacity:.8"></i><i style="left:81.620px;top:3.967px;width:6.147px;height:.6px;background:#06989a;opacity:.8"></i><i style="left:1.833px;top:3.967px;width:.6px;height:248.067px;background:#06989a;opacity:.8"></i><i style="left:1.833px;top:251.433px;width:85.933px;height:.6px;background:#06989a;opacity:.8"></i><i style="left:87.167px;top:3.967px;width:.6px;height:91.053px;background:#06989a;opacity:.8"></i><i style="left:87.167px;top:161.833px;width:.6px;height:90.200px;background:#06989a;opacity:.8"></i><i style="left:18.900px;top:63.700px;width:13.400px;height:.6px;background:#06989a;opacity:.8"></i><i style="left:18.900px;top:63.700px;width:.6px;height:145.667px;background:#06989a;opacity:.8"></i><i style="left:31.700px;top:63.700px;width:.6px;height:145.667px;background:#06989a;opacity:.8"></i><i style="left:18.900px;top:191.700px;width:13.400px;height:.6px;background:#06989a;opacity:.8"></i><i style="left:18.900px;top:208.767px;width:13.400px;height:.6px;background:#06989a;opacity:.8"></i><i style="left:57.300px;top:63.700px;width:13.400px;height:.6px;background:#06989a;opacity:.8"></i><i style="left:57.300px;top:63.700px;width:.6px;height:145.667px;background:#06989a;opacity:.8"></i><i style="left:70.100px;top:63.700px;width:.6px;height:145.667px;background:#06989a;opacity:.8"></i><i style="left:57.300px;top:191.700px;width:13.400px;height:.6px;background:#06989a;opacity:.8"></i><i style="left:57.300px;top:208.767px;width:13.400px;height:.6px;background:#06989a;opacity:.8"></i><i style="left:21.333px;top:170.667px;width:8.533px;height:17.067px;background:#6bbd1e"></i><i style="left:59.733px;top:68.267px;width:8.533px;height:17.067px;background:#dc1414"></i><i style="left:59.733px;top:85.333px;width:8.533px;height:51.200px;background:#e0e0de"></i><i style="left:59.733px;top:136.533px;width:8.533px;height:51.200px;background:#6bbd1e"></i><i style="left:21.333px;top:196.267px;width:8.533px;height:8.533px;background:#4e9a06"></i><i style="left:59.733px;top:196.267px;width:8.533px;height:8.533px;background:#4e9a06"></i><span style="position:absolute;left:85.53px;top:94.37px;font:7.4px/8.533px 'DejaVu Sans',sans-serif;color:#06989a">→</span><span style="position:absolute;left:85.53px;top:102.90px;font:7.4px/8.533px 'DejaVu Sans',sans-serif;color:#06989a">→</span><span style="position:absolute;left:85.53px;top:111.43px;font:7.4px/8.533px 'DejaVu Sans',sans-serif;color:#06989a">→</span><span style="position:absolute;left:85.53px;top:119.97px;font:7.4px/8.533px 'DejaVu Sans',sans-serif;color:#06989a">→</span><span style="position:absolute;left:85.53px;top:128.50px;font:7.4px/8.533px 'DejaVu Sans',sans-serif;color:#06989a">→</span><span style="position:absolute;left:85.53px;top:137.03px;font:7.4px/8.533px 'DejaVu Sans',sans-serif;color:#06989a">→</span><span style="position:absolute;left:85.53px;top:145.57px;font:7.4px/8.533px 'DejaVu Sans',sans-serif;color:#06989a">→</span><span style="position:absolute;left:85.53px;top:154.10px;font:7.4px/8.533px 'DejaVu Sans',sans-serif;color:#06989a">→</span><i style="left:8.533px;top:221.867px;width:34.133px;height:8.533px;background:#3465a4"></i><i style="left:46.933px;top:221.867px;width:34.133px;height:8.533px;background:#3465a4"></i></div><div class="ttx" style="left:-0.3px;top:0.7px"><b style="left:96.02px;top:0.00px;color:#fce94f;font-weight:bold;-webkit-text-stroke:0;">AlsaMixer v1.1.3</b><b style="left:96.02px;top:89.82px;color:#fce94f;font-weight:bold;-webkit-text-stroke:0;">HDA Intel PCH</b><b style="left:96.02px;top:179.65px;color:#fce94f;font-weight:bold;-webkit-text-stroke:0;">Realtek ALC892</b><b style="left:96.02px;top:269.47px;color:#fce94f;font-weight:bold;-webkit-text-stroke:0;">Playback</b><b style="left:96.02px;top:359.30px;color:#fce94f;font-weight:bold;-webkit-text-stroke:0;">Master [dB gain:</b><b style="left:240.04px;top:2065.96px;color:#ffffff;font-weight:bold;-webkit-text-stroke:0;">OO</b><b style="left:672.11px;top:2065.96px;color:#ffffff;font-weight:bold;-webkit-text-stroke:0;">OO</b><b style="left:240.04px;top:2245.61px;color:#fce94f;font-weight:bold;-webkit-text-stroke:0;">14</b><b style="left:528.09px;top:2245.61px;color:#fce94f;font-weight:bold;-webkit-text-stroke:0;">100</b><b style="left:672.11px;top:2245.61px;color:#34e2e2;font-weight:bold;-webkit-text-stroke:0;">&lt;&gt;</b><b style="left:768.12px;top:2245.61px;color:#fce94f;font-weight:bold;-webkit-text-stroke:0;">100</b><b style="left:48.01px;top:2335.44px;color:#ef2929;font-weight:bold;-webkit-text-stroke:0;">&lt;</b><b style="left:96.02px;top:2335.44px;color:#ef2929;font-weight:bold;-webkit-text-stroke:0;"> Master </b><b style="left:480.08px;top:2335.44px;color:#ef2929;font-weight:bold;-webkit-text-stroke:0;">&gt;</b><b style="left:528.09px;top:2335.44px;color:#ffffff;font-weight:bold;-webkit-text-stroke:0;">Headphon</b></div></div><div class="abs" style="left:511.8px;top:282.6px;width:512.2px;height:282.4px;background:#e95420"></div><div class="ttl" style="left:513px;top:283px;color:#fff"><span class="f-ttl" style="display:inline-block;transform-origin:0 50%;transform:scaleX(0.9474)">joe@ubuntu: ~/.config/i3</span></div><div class="menu" style="left:513.4px;top:292.8px;width:510px"><span style="left:2.8px"><span class="f-menu" style="letter-spacing:-0.170px">File</span></span><span style="left:21.1px"><span class="f-menu" style="letter-spacing:-0.059px">Edit</span></span><span style="left:40.6px"><span class="f-menu" style="letter-spacing:0.059px">View</span></span><span style="left:64.2px"><span class="f-menu" style="letter-spacing:-0.220px">Search</span></span><span style="left:94px"><span class="f-menu" style="letter-spacing:0.054px">Terminal</span></span><span style="left:130.3px"><span class="f-menu" style="letter-spacing:0.063px">Help</span></span></div><div class="abs" style="left:513.4px;top:305.2px;width:509.4px;height:259.2px;background:#300a24"></div><div class="abs" style="left:1020px;top:464px;width:2.8px;height:100.4px;background:#e0673a"></div><div class="term" style="left:513.4px;top:305.9px"><div class="tbg"></div><div class="ttx" style="left:0.5px;top:0.7px"><b style="left:0.00px;top:1437.19px;color:#8ae234;font-weight:bold;-webkit-text-stroke:0;">joe@ubuntu</b><b style="left:480.08px;top:1437.19px;color:#ffffff;">:</b><b style="left:528.09px;top:1437.19px;color:#729fcf;font-weight:bold;-webkit-text-stroke:0;">~/.config/i3</b><b style="left:1104.18px;top:1437.19px;color:#ffffff;">$ pianobar</b><b style="left:0.00px;top:1527.02px;color:#ffffff;">Welcome to pianobar (2017.08.30)! Press ? for a list of commands.</b><b style="left:0.00px;top:1616.84px;color:#ffffff;">(i) Login... Ok.</b><b style="left:0.00px;top:1706.67px;color:#ffffff;">(i) Get stations... Ok.</b><b style="left:0.00px;top:1796.49px;color:#ffffff;">|&gt;  Station "Smashing Pumpkins Radio" (3453697710955468095)</b><b style="left:0.00px;top:1886.32px;color:#ffffff;">(i) Receiving new playlist... Ok.</b><b style="left:0.00px;top:1976.14px;color:#ffffff;">|&gt;  "Got You (Where I Want You) (Re-Recorded)" by "The Flys" on "Smash Hits Of The '80s &amp; '90s (Re-Recorded)"</b><b style="left:0.00px;top:2065.96px;color:#ffffff;">|&gt;  "Tonight, Tonight" by "Smashing Pumpkins" on "Mellon Collie And The Infinite Sadness (Deluxe Edition)" &lt;3</b><b style="left:0.00px;top:2155.79px;color:#ffffff;">|&gt;  "Brain Stew" by "Green Day" on "Insomniac" &lt;3</b><b style="left:0.00px;top:2245.61px;color:#ffffff;">|&gt;  "December" by "Collective Soul" on "Collective Soul"</b><b style="left:0.00px;top:2335.44px;color:#ffffff;">(i) Receiving new playlist... Ok.</b><b style="left:0.00px;top:2425.26px;color:#ffffff;">|&gt;  "Creep" by "Radiohead" on "Pablo Honey (Explicit)"</b><b style="left:0.00px;top:2515.09px;color:#ffffff;">|&gt;  "Wonderful (2009)" by "Everclear" on "In A Different Light"</b><b style="left:0.00px;top:2604.91px;color:#ffffff;">#   -02:08/04:21</b></div></div><div class="abs" style="left:0;top:565px;width:1024px;height:11px;background:#000"></div><div class="abs" style="left:1px;top:566px;width:7.5px;height:9px;background:#222;border:.6px solid #3a3a3a;color:#888;font:5.6px/8px 'DejaVu Sans',sans-serif;text-align:center">1</div><div class="abs" style="left:9.6px;top:566px;width:7.8px;height:9px;background:#2c001e;border:.6px solid #5a3a52;color:#fff;font:5.6px/8px 'DejaVu Sans',sans-serif;text-align:center">2</div><div style="position:absolute;left:776.2px;top:565.6px;height:10.4px;font-size:6.4px;line-height:10.4px;color:#d6d6d6;white-space:pre"><span class="f-sb" style="display:inline-block;transform-origin:0 50%;transform:scaleX(0.8973)">78.4 GiB | <span style="color:#3f93cf">DHCP: no</span> | <span style="color:#c98a3c">E: 192.168.1.10 (1000 Mbit/s)</span> | Avg CPU Load 0.19 | 2018-11-24 19:08:40</span></div></div></body></html>
